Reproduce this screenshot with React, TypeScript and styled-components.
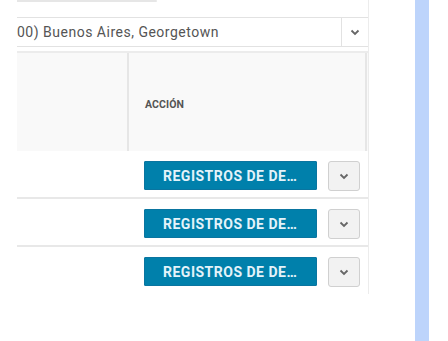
import React from "react";
import styled, { createGlobalStyle } from "styled-components";

const Global = createGlobalStyle`
  html, body { margin: 0; padding: 0; background: #fff; }
  body { font-family: Roboto, "Liberation Sans", Arial, sans-serif; }
  * { box-sizing: border-box; }
`;

const Page = styled.div`
  display: flex;
  width: 448px;
  height: 341px;
  overflow: hidden;
  background: #fff;
`;

const Panel = styled.div`
  margin-left: 17px;
  width: 352px;
  height: 294px;
  border-right: 1px solid #ececec;
  display: flex;
  flex-direction: column;
`;

const TopLine = styled.div`
  width: 140px;
  height: 2px;
  background: #e6e6e6;
  border-radius: 0 2px 2px 0;
`;

const Select = styled.div`
  margin-top: 15px;
  height: 30px;
  display: flex;
  border-top: 1px solid #e2e2e2;
  border-bottom: 1px solid #e2e2e2;
`;

const SelectText = styled.div`
  flex: 1;
  display: flex;
  align-items: center;
  font-size: 14px;
  letter-spacing: 0.5px;
  color: #555;
  white-space: nowrap;
  overflow: hidden;
`;

const SelectArrow = styled.div`
  width: 27px;
  border-left: 1px solid #e2e2e2;
  display: flex;
  align-items: center;
  justify-content: center;
`;

const Table = styled.div`
  margin-top: 4px;
  border-top: 2px solid #ececec;
  display: flex;
  flex-direction: column;
`;

const HeaderRow = styled.div`
  height: 98px;
  display: flex;
  background: #f9f9f9;
`;

const HeadCell = styled.div<{ $w?: number }>`
  ${(p) => (p.$w ? `width: ${p.$w}px;` : "flex: 1;")}
  border-right: 2px solid #e6e6e6;
  display: flex;
  align-items: center;
  padding-left: 16px;
  padding-top: 4px;
  font-size: 10.5px;
  font-weight: 700;
  color: #555;
  letter-spacing: 0.1px;
`;

const HeadSpacer = styled.div`
  width: 1px;
`;

const Row = styled.div<{ $last?: boolean }>`
  display: flex;
  align-items: flex-start;
  justify-content: flex-end;
  padding: 10px 8px 0 0;
  border-bottom: ${(p) => (p.$last ? "0" : "2px solid #e8e8e8")};
  height: ${(p) => (p.$last ? "46px" : "48px")};
`;

const ActionButton = styled.button`
  width: 173px;
  height: 29px;
  border: 1px solid #0a75a0;
  background: #0080ab;
  color: #e4f3fa;
  font-family: Roboto, "Liberation Sans", Arial, sans-serif;
  font-size: 14px;
  letter-spacing: 0.5px;
  font-weight: 700;
  text-transform: uppercase;
  padding: 0 18px;
  text-align: left;
  white-space: nowrap;
  overflow: hidden;
  text-overflow: ellipsis;
  border-radius: 1px;
`;

const ToggleButton = styled.button`
  margin-left: 11px;
  width: 32px;
  height: 30px;
  border: 1px solid #d0d0d0;
  border-radius: 3px;
  background: #f2f2f2;
  display: flex;
  align-items: center;
  justify-content: center;
  padding: 0;
`;

const BlueBar = styled.div`
  margin-left: 46px;
  width: 14px;
  height: 341px;
  background: #bdd4fb;
`;

const Chevron = () => (
  <svg width="10" height="7" viewBox="0 0 10 7">
    <path d="M1.5 1.5 L5 5 L8.5 1.5" fill="none" stroke="#666" strokeWidth="1.8" />
  </svg>
);

export default function App() {
  const rows = [0, 1, 2];
  return (
    <Page>
      <Global />
      <Panel>
        <TopLine />
        <Select>
          <SelectText>00) Buenos Aires, Georgetown</SelectText>
          <SelectArrow>
            <Chevron />
          </SelectArrow>
        </Select>
        <Table>
          <HeaderRow>
            <HeadCell $w={112} />
            <HeadCell>ACCIÓN</HeadCell>
            <HeadSpacer />
          </HeaderRow>
          {rows.map((r) => (
            <Row key={r} $last={r === rows.length - 1}>
              <ActionButton>Registros de destino</ActionButton>
              <ToggleButton>
                <Chevron />
              </ToggleButton>
            </Row>
          ))}
        </Table>
      </Panel>
      <BlueBar />
    </Page>
  );
}
